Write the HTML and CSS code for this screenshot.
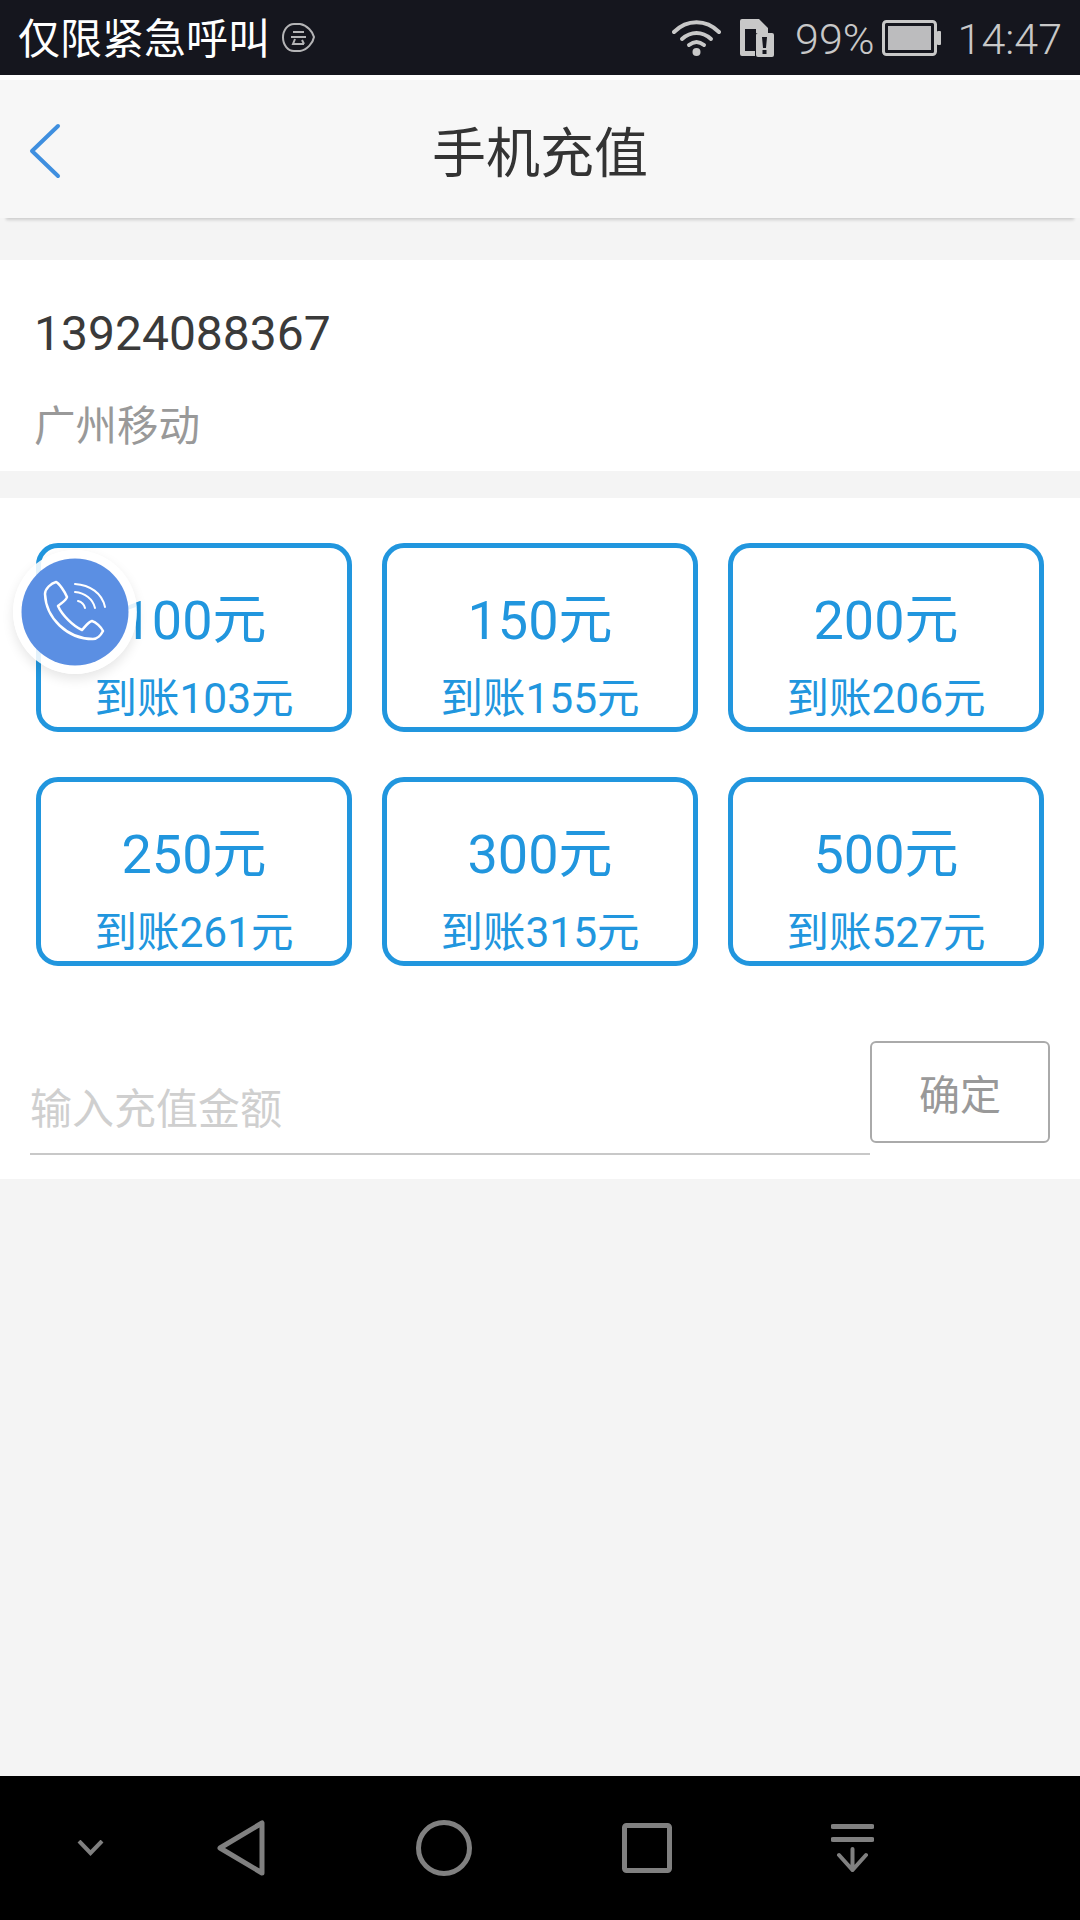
FILE: index.html
```html
<!DOCTYPE html>
<html lang="zh-CN">
<head>
    <meta charset="UTF-8">
    <meta name="viewport" content="width=device-width, initial-scale=1.0">
    <title>手机充值</title>
    <link rel="stylesheet" href="styles.css">
</head>
<body>
    <div class="page">
        <div class="status-bar">
            <span class="carrier">仅限紧急呼叫</span>
            <svg class="cloud-badge" viewBox="0 0 33 31" fill="none" stroke="#b4b4b6">
                <path d="M12 2h6c7 1 13 8 14 13-1 6-7 13-14 14h-6C6 29 1 23 1 15.500S6 2 12 2z" stroke-width="2"/>
                <path d="M11 10h11M9 15h15M13 17l-2 5h11M20 18l2 4" stroke-width="2"/>
            </svg>
            <span class="status-right">
                <svg class="wifi" viewBox="0 0 49 37" fill="none" stroke="#c8c8c8" stroke-linecap="round">
                    <path d="M2 13C15 0 34 0 47 13" stroke-width="4"/>
                    <path d="M10 20c9-8 20-8 29 0" stroke-width="4"/>
                    <path d="M17 26c5-4 10-4 15 0" stroke-width="4"/>
                    <circle cx="24.500" cy="33" r="4" fill="#c8c8c8" stroke="none"/>
                </svg>
                <svg class="sim" viewBox="0 0 34 38">
                    <path fill="#c8c8c8" d="M2 0h17l9 9v5H16V10H5v22h10v5H2a2 2 0 0 1-2-2V2a2 2 0 0 1 2-2z"/>
                    <rect x="16" y="14" width="18" height="24" rx="2" fill="#c8c8c8"/>
                    <path fill="#15161e" d="M22 18h5l-1 11h-3z"/>
                    <rect x="22.500" y="31" width="4" height="4" fill="#15161e"/>
                </svg>
                <span class="battery-pct">99%</span>
                <svg class="battery" viewBox="0 0 60 36">
                    <rect x="1.500" y="1.500" width="52" height="33" rx="3" fill="none" stroke="#c8c8c8" stroke-width="3"/>
                    <rect x="6" y="6" width="43" height="24" fill="#bcbcbe"/>
                    <rect x="55" y="11" width="4" height="14" rx="1" fill="#c8c8c8"/>
                </svg>
                <span class="clock">14:47</span>
            </span>
        </div>

        <div class="title-bar">
            <svg class="back" viewBox="0 0 32 56" fill="none" stroke="#3f8fdf" stroke-width="4" stroke-linecap="round" stroke-linejoin="round">
                <path d="M29 3L3 28l26 25"/>
            </svg>
            <h1>手机充值</h1>
        </div>

        <div class="main">
            <div class="phone-info">
                <div class="phone-number">13924088367</div>
                <div class="phone-area">广州移动</div>
            </div>

            <div class="recharge">
                <div class="amounts">
                    <div class="amount"><div class="price">100元</div><div class="credit">到账103元</div></div>
                    <div class="amount"><div class="price">150元</div><div class="credit">到账155元</div></div>
                    <div class="amount"><div class="price">200元</div><div class="credit">到账206元</div></div>
                    <div class="amount"><div class="price">250元</div><div class="credit">到账261元</div></div>
                    <div class="amount"><div class="price">300元</div><div class="credit">到账315元</div></div>
                    <div class="amount"><div class="price">500元</div><div class="credit">到账527元</div></div>
                </div>
                <div class="custom-row">
                    <input class="custom-input" type="text" placeholder="输入充值金额">
                    <button class="confirm">确定</button>
                </div>
            </div>
        </div>

        <div class="nav-bar">
            <svg class="nav-hide" viewBox="0 0 27 16" fill="none" stroke="#808080" stroke-width="4">
                <path d="M2 1l11.500 12L25 1"/>
            </svg>
            <svg class="nav-back" viewBox="0 0 48 56" fill="none" stroke="#808080" stroke-width="5" stroke-linejoin="round">
                <path d="M45 3v50L3 28z"/>
            </svg>
            <svg class="nav-home" viewBox="0 0 56 56" fill="none" stroke="#808080" stroke-width="5">
                <circle cx="28" cy="28" r="25.500"/>
            </svg>
            <svg class="nav-recent" viewBox="0 0 50 50" fill="none" stroke="#808080" stroke-width="5" stroke-linejoin="round">
                <rect x="2.500" y="2.500" width="45" height="45" rx="2"/>
            </svg>
            <svg class="nav-pull" viewBox="0 0 43 48" fill="none" stroke="#808080" stroke-linecap="round">
                <path d="M2 2.500h39M2 15.500h39" stroke-width="5"/>
                <path d="M21.500 25v21M8 31l13.500 15L35 31" stroke-width="4"/>
            </svg>
        </div>

        <div class="float-call">
            <svg viewBox="0 0 108 108" fill="none" stroke="#fff" stroke-linecap="round" stroke-linejoin="round">
                <circle cx="54" cy="54" r="53.500" fill="#5b8fe3" stroke="none"/>
                <path stroke-width="2.500" d="M24 36c0-5 6-11 11-12 3 1 9 10 11 15-1 4-6 6-9 9 4 9 15 20 24 24 3-3 6-8 10-9 4 1 9 6 11 10-2 4-6 8-10 8C46 81 25 60 24 36z"/>
                <path stroke-width="2" d="M54 26c15 1 27 9 30 23M54 34c10 1 18 7 20 16M57 43c4 1 6 3 7 7"/>
            </svg>
        </div>
    </div>
</body>
</html>
```

FILE: styles.css
```css
* {
    box-sizing: border-box;
}
body {
    margin: 0;
    font-family: Roboto, "Noto Sans CJK SC", sans-serif;
    background-color: #f4f4f4;
}
.page {
    position: relative;
    display: flex;
    flex-direction: column;
    width: 1080px;
    height: 1920px;
    overflow: hidden;
}

/* status bar */
.status-bar {
    display: flex;
    align-items: center;
    flex: none;
    height: 75px;
    padding: 0 18px 0 18px;
    background-color: #15161e;
}
.carrier {
    margin-top: -4px;
    font-size: 42px;
    color: #fff;
}
.cloud-badge {
    width: 33px;
    height: 31px;
    margin-left: 12px;
    margin-top: -1px;
}
.status-right {
    display: flex;
    align-items: center;
    margin-left: auto;
    font-size: 43px;
    font-weight: 300;
    color: #c8c8c8;
}
.wifi {
    width: 49px;
    height: 37px;
}
.sim {
    width: 34px;
    height: 38px;
    margin-left: 19px;
}
.battery-pct {
    margin-left: 21px;
    margin-top: 2px;
}
.battery {
    width: 60px;
    height: 36px;
    margin-left: 7px;
}
.clock {
    margin-left: 16px;
    margin-top: 2px;
}

/* title */
.title-bar {
    position: relative;
    display: flex;
    align-items: center;
    justify-content: center;
    flex: none;
    height: 143px;
    border-top: 5px solid #fff;
    background-color: #f7f7f7;
    box-shadow: 0 8px 3px -6px rgba(0, 0, 0, 0.16);
}
.title-bar h1 {
    margin: 0;
    font-size: 54px;
    font-weight: 400;
    color: #333;
}
.back {
    position: absolute;
    left: 29px;
    top: 43px;
    width: 32px;
    height: 56px;
}

.main {
    flex: 1;
    padding-top: 42px;
}

/* phone number */
.phone-info {
    height: 211px;
    padding: 46px 34px 0;
    background-color: #fff;
}
.phone-number {
    font-size: 48px;
    line-height: 56px;
    color: #3a3a3a;
}
.phone-area {
    margin-top: 39px;
    font-size: 41.500px;
    line-height: 52px;
    color: #999;
}

/* amounts */
.recharge {
    margin-top: 27px;
    padding: 45px 36px 24px;
    background-color: #fff;
}
.amounts {
    display: grid;
    grid-template-columns: repeat(3, 316px);
    column-gap: 30px;
    row-gap: 45px;
}
.amount {
    height: 189px;
    padding-top: 42px;
    border: 5px solid #2196de;
    border-radius: 22px;
    text-align: center;
    color: #2196de;
}
.price {
    font-size: 54px;
    line-height: 62px;
}
.credit {
    margin-top: 21px;
    font-size: 42.500px;
    line-height: 52px;
}

.custom-row {
    display: flex;
    align-items: flex-start;
    height: 114px;
    margin: 75px -6px 0 -6px;
}
.custom-input {
    flex: 1;
    height: 114px;
    padding: 24px 0 0;
    border: none;
    border-bottom: 2px solid #c8c8c8;
    outline: none;
    font-family: inherit;
    font-size: 42px;
    background: none;
}
.custom-input::placeholder {
    color: #cfcfcf;
}
.confirm {
    flex: none;
    width: 180px;
    height: 102px;
    border: 2px solid #aaa;
    border-radius: 6px;
    font-family: inherit;
    font-size: 41px;
    color: #999;
    background-color: #fff;
}

/* navigation */
.nav-bar {
    display: grid;
    grid-template-columns: 180px 122px 284px 122px 288px;
    justify-items: center;
    align-items: center;
    flex: none;
    height: 144px;
    background-color: #000;
}
.nav-hide {
    width: 27px;
    height: 16px;
}
.nav-back {
    width: 48px;
    height: 56px;
}
.nav-home {
    width: 56px;
    height: 56px;
}
.nav-recent {
    width: 50px;
    height: 50px;
}
.nav-pull {
    width: 43px;
    height: 48px;
}

/* floating call button */
.float-call {
    position: absolute;
    left: 13px;
    top: 550px;
    width: 124px;
    height: 124px;
    padding: 8px;
    border-radius: 50%;
    background-color: rgba(255, 255, 255, 0.88);
    box-shadow: 0 5px 12px rgba(0, 0, 0, 0.1);
}
.float-call svg {
    display: block;
    width: 108px;
    height: 108px;
}
```
